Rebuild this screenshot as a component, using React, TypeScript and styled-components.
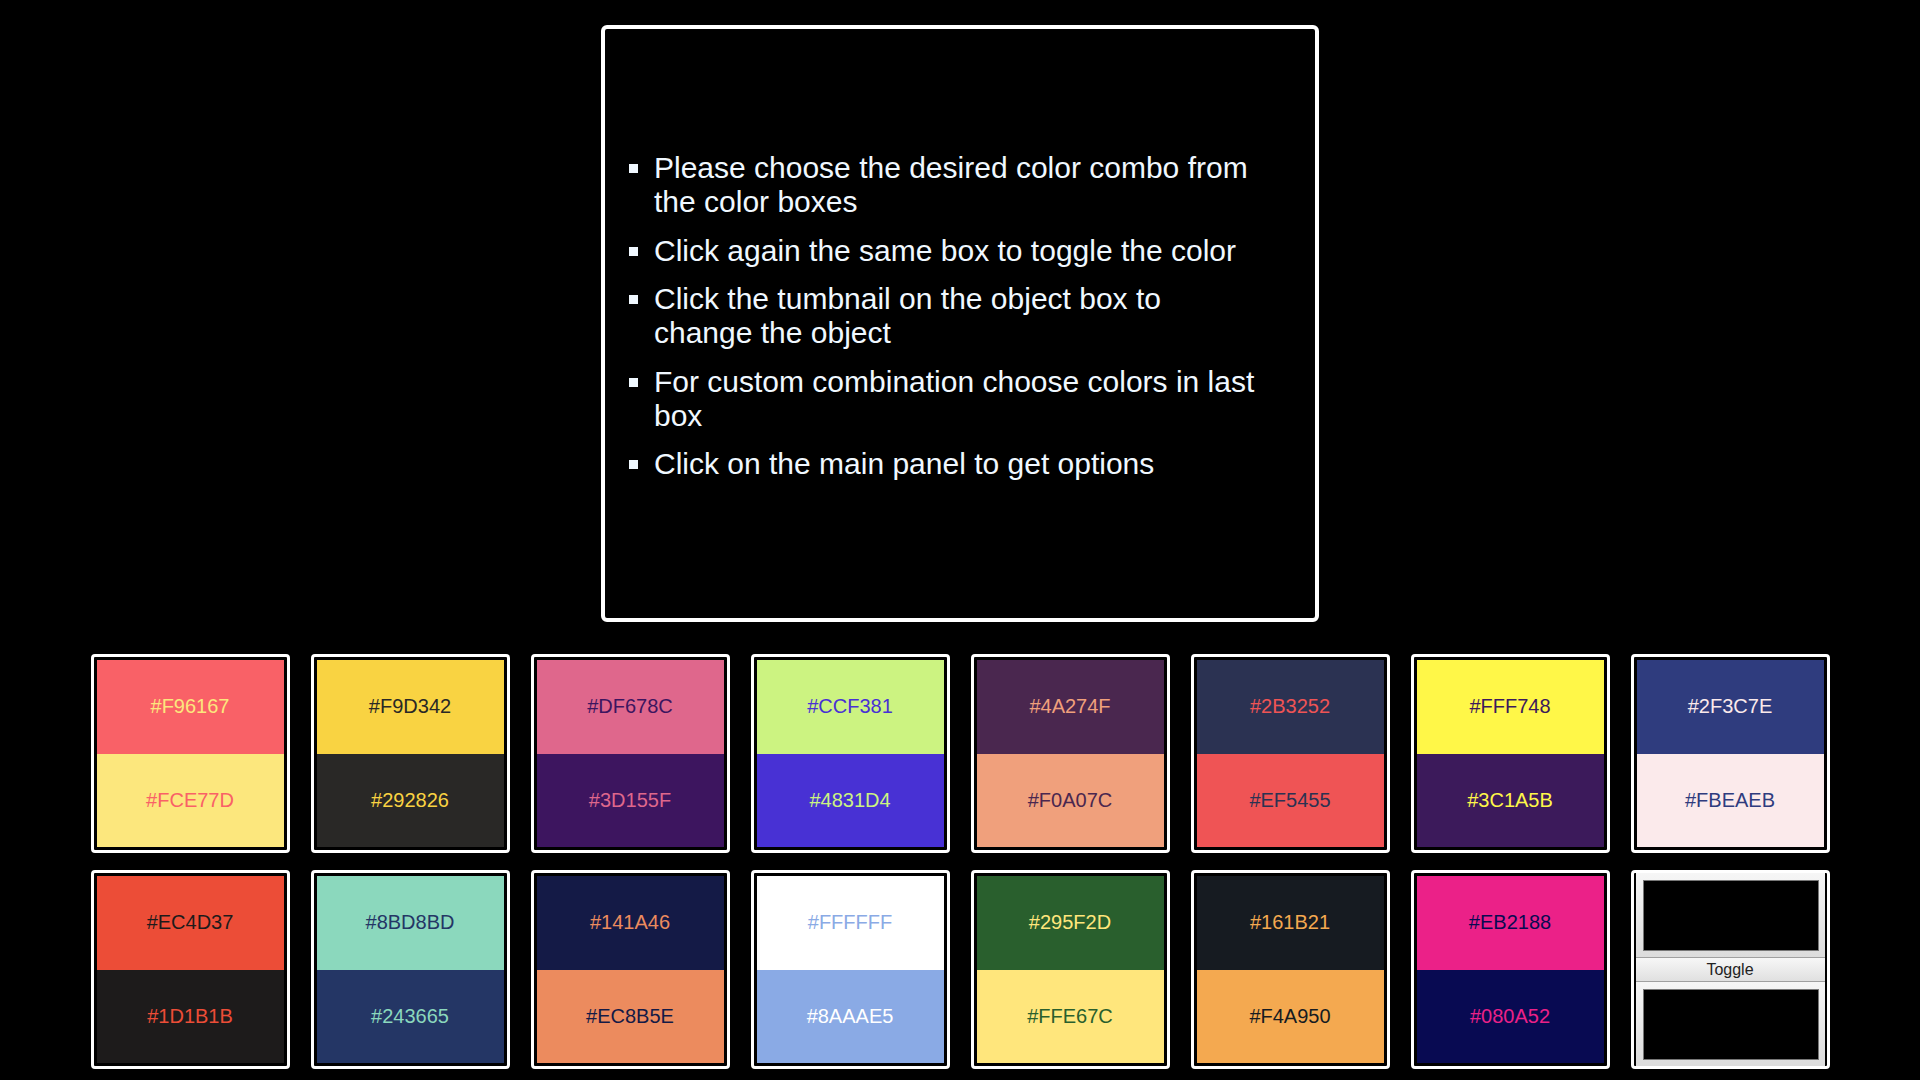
import React from "react";
import styled, { createGlobalStyle } from "styled-components";

const GlobalStyle = createGlobalStyle`
  html, body {
    margin: 0;
    padding: 0;
    background: #000;
  }
  body {
    font-family: "Liberation Sans", Arial, sans-serif;
    overflow: hidden;
  }
`;

const Page = styled.div`
  display: flex;
  flex-direction: column;
  align-items: center;
  padding-top: 25px;
`;

const Panel = styled.div`
  box-sizing: border-box;
  width: 718px;
  height: 597px;
  border: 4px solid #fff;
  border-radius: 6px;
  display: flex;
  align-items: center;
`;

const List = styled.ul`
  box-sizing: border-box;
  width: 655px;
  margin: 0;
  padding: 0 0 0 49px;
  list-style: square;
  color: #f0f8ff;
  font-size: 30px;
  line-height: normal;
`;

const Item = styled.li`
  margin-bottom: 14.5px;
`;

const Grid = styled.div`
  margin-top: 32px;
  display: grid;
  grid-template-columns: repeat(8, 199px);
  grid-auto-rows: 199px;
  column-gap: 21px;
  row-gap: 17px;
`;

const Box = styled.div`
  box-sizing: border-box;
  border: 3px solid #fff;
  border-radius: 4px;
  padding: 3px;
  background: #000;
  display: flex;
  flex-direction: column;
`;

const Half = styled.div<{ $bg: string; $fg: string }>`
  flex: 1;
  display: flex;
  align-items: center;
  justify-content: center;
  background: ${(p) => p.$bg};
  color: ${(p) => p.$fg};
  font-size: 20px;
`;

const ToggleBox = styled(Box)`
  padding: 0 2px;
`;

const ColorWell = styled.div`
  box-sizing: border-box;
  flex: 1;
  padding: 7px 6px 6px 7px;
  background: linear-gradient(#f6f6f6, #dcdcdc);
  display: flex;
`;

const Swatch = styled.div`
  flex: 1;
  background: #000;
  border: 1px solid #777;
`;

const ToggleButton = styled.button`
  box-sizing: border-box;
  height: 25px;
  flex: none;
  margin: 0;
  padding: 0;
  border: none;
  border-top: 1px solid #a0a0a0;
  border-bottom: 1px solid #a0a0a0;
  background: linear-gradient(#f7f7f7, #e0e0e0);
  color: #222;
  font-family: "Liberation Sans", Arial, sans-serif;
  font-size: 16px;
  line-height: 22px;
`;

const items = [
  "Please choose the desired color combo from the color boxes",
  "Click again the same box to toggle the color",
  "Click the tumbnail on the object box to change the object",
  "For custom combination choose colors in last box",
  "Click on the main panel to get options",
];

const combos: [string, string][] = [
  ["#F96167", "#FCE77D"],
  ["#F9D342", "#292826"],
  ["#DF678C", "#3D155F"],
  ["#CCF381", "#4831D4"],
  ["#4A274F", "#F0A07C"],
  ["#2B3252", "#EF5455"],
  ["#FFF748", "#3C1A5B"],
  ["#2F3C7E", "#FBEAEB"],
  ["#EC4D37", "#1D1B1B"],
  ["#8BD8BD", "#243665"],
  ["#141A46", "#EC8B5E"],
  ["#FFFFFF", "#8AAAE5"],
  ["#295F2D", "#FFE67C"],
  ["#161B21", "#F4A950"],
  ["#EB2188", "#080A52"],
];

export default function App() {
  return (
    <>
      <GlobalStyle />
      <Page>
        <Panel>
          <List>
            {items.map((t) => (
              <Item key={t}>{t}</Item>
            ))}
          </List>
        </Panel>
        <Grid>
          {combos.map(([a, b]) => (
            <Box key={a + b}>
              <Half $bg={a} $fg={b}>
                {a}
              </Half>
              <Half $bg={b} $fg={a}>
                {b}
              </Half>
            </Box>
          ))}
          <ToggleBox>
            <ColorWell>
              <Swatch />
            </ColorWell>
            <ToggleButton>Toggle</ToggleButton>
            <ColorWell>
              <Swatch />
            </ColorWell>
          </ToggleBox>
        </Grid>
      </Page>
    </>
  );
}
